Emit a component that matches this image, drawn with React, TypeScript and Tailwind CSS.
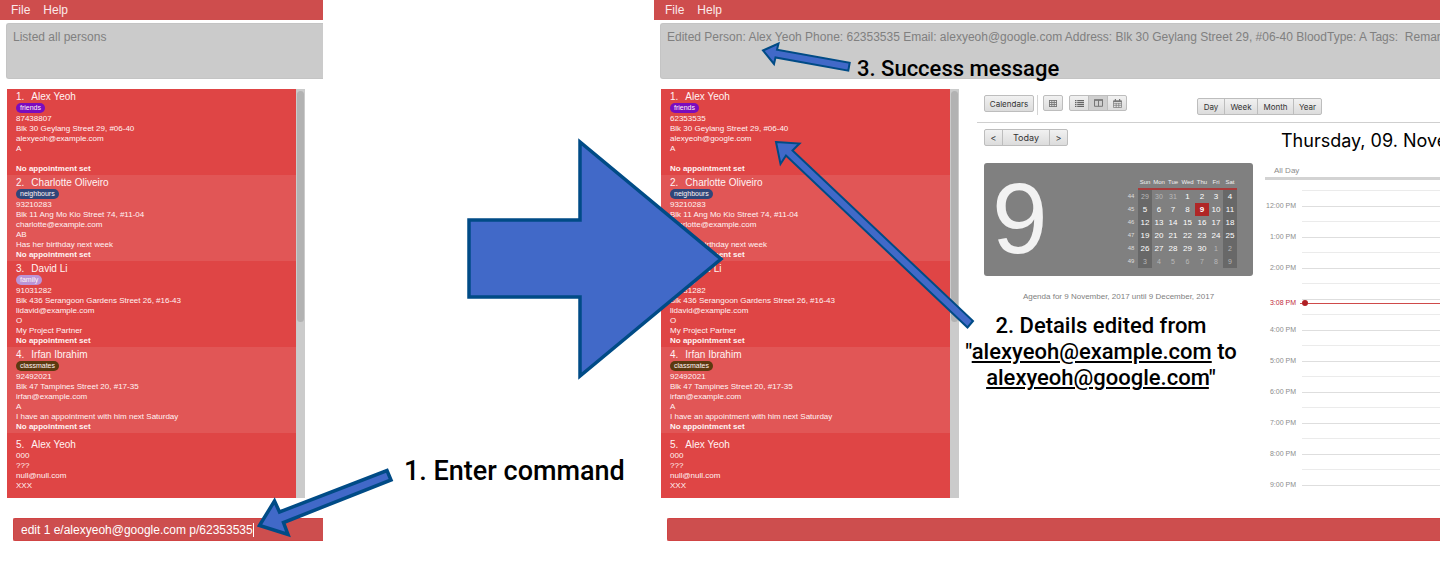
import React from "react";

type Person = {
  name: string;
  tag?: string;
  tagClass?: string;
  lines: string[];
  appointment?: string;
};

const basePeople: Person[] = [
  {
    name: "Alex Yeoh",
    tag: "friends",
    tagClass: "bg-[#7a0cbe]",
    lines: ["87438807", "Blk 30 Geylang Street 29, #06-40", "alexyeoh@example.com", "A", ""],
    appointment: "No appointment set",
  },
  {
    name: "Charlotte Oliveiro",
    tag: "neighbours",
    tagClass: "bg-[#2f4679]",
    lines: ["93210283", "Blk 11 Ang Mo Kio Street 74, #11-04", "charlotte@example.com", "AB", "Has her birthday next week"],
    appointment: "No appointment set",
  },
  {
    name: "David Li",
    tag: "family",
    tagClass: "bg-[#bb95d8]",
    lines: ["91031282", "Blk 436 Serangoon Gardens Street 26, #16-43", "lidavid@example.com", "O", "My Project Partner"],
    appointment: "No appointment set",
  },
  {
    name: "Irfan Ibrahim",
    tag: "classmates",
    tagClass: "bg-[#5b390f]",
    lines: ["92492021", "Blk 47 Tampines Street 20, #17-35", "irfan@example.com", "A", "I have an appointment with him next Saturday"],
    appointment: "No appointment set",
  },
  { name: "Alex Yeoh", lines: ["000", "???", "null@null.com", "XXX"] },
];

const editedPeople: Person[] = [
  {
    ...basePeople[0],
    lines: ["62353535", "Blk 30 Geylang Street 29, #06-40", "alexyeoh@google.com", "A", ""],
  },
  ...basePeople.slice(1),
];

function PersonList({ people }: { people: Person[] }) {
  return (
    <div className="flex w-[298px] shrink-0 bg-[#cbcbcb]">
      <ol className="flex w-[289px] flex-col bg-[#df4545] text-[8px] leading-[10px] text-[#fff3f3]">
        {people.map((p, i) => (
          <li
            key={i}
            className={
              (i % 2 ? "bg-[#e15656] " : "bg-[#df4545] ") +
              (p.tag ? "pt-0.5 pb-px " : "pt-1.5 pb-[7px] ") +
              "pl-[9px]"
            }
          >
            <h2 className="flex gap-[7px] text-[10px] leading-3">
              <span>{i + 1}.</span>
              <span>{p.name}</span>
            </h2>
            {p.tag && (
              <div className="mb-px flex">
                <span className={"rounded-[5px] px-1 text-[7px] leading-[10px] " + p.tagClass}>{p.tag}</span>
              </div>
            )}
            {p.lines.map((l, j) => (
              <p key={j} className="h-[10px] whitespace-nowrap">
                {l}
              </p>
            ))}
            {p.appointment && <p className="font-bold">{p.appointment}</p>}
          </li>
        ))}
      </ol>
      <div className="w-[9px] px-px pt-0.5">
        <div className="h-[231px] rounded-sm bg-[#b2b2b2]" />
      </div>
    </div>
  );
}

function AppWindow({
  message,
  people,
  command,
  children,
}: {
  message: string;
  people: Person[];
  command: string;
  children?: React.ReactNode;
}) {
  return (
    <section className="flex flex-col overflow-hidden">
      <nav className="flex h-5 items-center gap-[13px] bg-[#ce4d4d] pl-[11px] text-[12px] text-[#fbeaea]">
        <button type="button">File</button>
        <button type="button">Help</button>
      </nav>
      <p
        role="status"
        className="mt-[3px] ml-1.5 h-14 overflow-hidden rounded-l-[3px] border border-r-0 border-[#c4c4c4] bg-[#cbcbcb] pt-[5px] pl-1.5 text-[12px] leading-4 whitespace-pre text-[#808080]"
      >
        {message}
      </p>
      <div className="mt-[10px] ml-[7px] flex h-[409px]">
        <PersonList people={people} />
        {children}
      </div>
      <div className="mt-5 ml-[13px] flex h-[23px] items-center rounded-l-[2px] border border-r-0 border-[#d04444] bg-[#cd4e4e] pl-[7px] text-[12px] text-white">
        <input
          aria-label="Command"
          defaultValue={command}
          className={"bg-transparent outline-none " + (command ? "field-sizing-content" : "min-w-0 flex-1")}
        />
        {command && <span className="h-3.5 w-px bg-white" />}
      </div>
    </section>
  );
}

function GridIcon() {
  return (
    <svg width="8" height="7" viewBox="0 0 8 7" fill="none" stroke="#777">
      <path d="M0 .5h8M0 2.5h8M0 4.5h8M0 6.5h8M.5 0v7M2.8 0v7M5.2 0v7M7.5 0v7" strokeWidth=".9" />
    </svg>
  );
}

function ListIcon() {
  return (
    <svg width="9" height="7" viewBox="0 0 9 7" fill="none" stroke="#666">
      <path d="M0 .7h1.5M0 2.6h1.5M0 4.5h1.5M0 6.4h1.5M2.2.7H9M2.2 2.6H9M2.2 4.5H9M2.2 6.4H9" strokeWidth="1.2" />
    </svg>
  );
}

function ColumnsIcon() {
  return (
    <svg width="9" height="8" viewBox="0 0 9 8" fill="none" stroke="#777">
      <path d="M.5 1h8v6.3h-8zM4.5 1v6.3" />
      <path d="M0 1h9" strokeWidth="1.4" />
    </svg>
  );
}

function CalendarIcon() {
  return (
    <svg width="9" height="9" viewBox="0 0 9 9" fill="none" stroke="#777">
      <path d="M.5 2h8v6.5h-8zM.5 4.3h8M.5 6.3h8M3.2 4v4.5M5.8 4v4.5" strokeWidth=".7" />
      <path d="M.3 2.2h8.4" strokeWidth="1.6" />
      <path d="M2.4 0v2M6.6 0v2" strokeWidth="1.2" />
    </svg>
  );
}

const groupClass =
  "flex overflow-hidden rounded-[2px] border border-[#bdbdbd] bg-linear-to-b from-[#f1f1f1] to-[#dcdcdc] text-[#333]";

const weekdays = [
  { name: "Sun", width: "w-[14px]" },
  { name: "Mon", width: "w-[14px]" },
  { name: "Tue", width: "w-[14px]" },
  { name: "Wed", width: "w-[15px]" },
  { name: "Thu", width: "w-[14px]" },
  { name: "Fri", width: "w-[14px]" },
  { name: "Sat", width: "w-[14px]" },
];

const weeks: { no: number; days: number[]; faded: (d: number) => boolean }[] = [
  { no: 44, days: [29, 30, 31, 1, 2, 3, 4], faded: (d) => d > 20 },
  { no: 45, days: [5, 6, 7, 8, 9, 10, 11], faded: () => false },
  { no: 46, days: [12, 13, 14, 15, 16, 17, 18], faded: () => false },
  { no: 47, days: [19, 20, 21, 22, 23, 24, 25], faded: () => false },
  { no: 48, days: [26, 27, 28, 29, 30, 1, 2], faded: (d) => d < 20 },
  { no: 49, days: [3, 4, 5, 6, 7, 8, 9], faded: () => true },
];

function MonthCard() {
  return (
    <div className="flex h-[113px] w-[269px] justify-between rounded-[3px] bg-[#808080] pr-4 pl-2">
      <div className="text-[100px] leading-[110px] text-[#f2f2f2]">9</div>
      <table className="mt-[13px] h-fit table-fixed border-collapse text-center text-[8px] leading-[13px]">
        <thead>
          <tr className="h-3 text-[6px] leading-3 text-[#f0f0f0]">
            <th className="w-3 p-0" />
            {weekdays.map((d) => (
              <th key={d.name} className={"border-b-2 border-[#a93a3a] p-0 font-normal " + d.width}>
                {d.name}
              </th>
            ))}
          </tr>
        </thead>
        <tbody>
          {weeks.map((w) => (
            <tr key={w.no}>
              <th className="p-0 pr-0.5 text-[6px] font-normal text-[#dedede]">{w.no}</th>
              {w.days.map((d, i) => (
                <td
                  key={i}
                  className={
                    "h-[13px] p-0 " +
                    (w.no === 45 && d === 9
                      ? "bg-[#b02626] font-bold "
                      : i === 0 || i === 6
                        ? "bg-[#686868] "
                        : "") +
                    (w.faded(d) ? "text-[7px] text-[#b9b9b9]" : "text-white")
                  }
                >
                  {d}
                </td>
              ))}
            </tr>
          ))}
        </tbody>
      </table>
    </div>
  );
}

const hours = ["12:00 PM", "1:00 PM", "2:00 PM", "", "4:00 PM", "5:00 PM", "6:00 PM", "7:00 PM", "8:00 PM", "9:00 PM"];

function DayView() {
  return (
    <div className="min-w-0 flex-1">
      <h1 className="h-[37px] overflow-hidden pl-4 font-[Inter,sans-serif] text-[18px] leading-6 whitespace-nowrap text-black">
        Thursday, 09. November 2017
      </h1>
      <div className="border-b-3 border-[#d3d3d3] pb-px pl-[9px] text-[8px] leading-[10px] text-[#8c8c8c]">All Day</div>
      <div className="relative pt-[10px]">
        <div className="ml-[37px] h-px bg-[#ebebeb]" />
        {hours.map((h, i) => (
          <div key={i} className="flex h-[31px] items-center gap-1.5">
            <span className="w-[31px] text-right text-[7px] whitespace-nowrap text-[#8c8c8c]">{h}</span>
            <div className={"h-full flex-1 " + (i < hours.length - 1 ? "border-b border-[#ebebeb]" : "")}>
              <div className="h-4 border-b border-[#dedede]" />
            </div>
          </div>
        ))}
        <div className="absolute top-[118px] right-0 left-0 flex h-[10px] items-center text-[7px] text-[#c22b3a]">
          <span className="w-[31px] text-right whitespace-nowrap">3:08 PM</span>
          <span className="ml-1 h-px w-0.5 bg-[#c84a4a]" />
          <span className="size-1.5 rounded-full bg-[#b01f24]" />
          <span className="h-px flex-1 bg-[#cf4a4a]" />
        </div>
      </div>
    </div>
  );
}

function CalendarPanel() {
  return (
    <div className="ml-[18px] flex min-w-0 flex-1 flex-col">
      <div className="flex h-[34px] shrink-0 items-start border-b border-[#cfcfcf] pt-1.5 pl-[7px] font-[Inter,sans-serif] text-[8px]">
        <button type="button" className={groupClass + " h-[17px] w-[50px] items-center justify-center"}>
          Calendars
        </button>
        <span className="mx-[3px] h-5 w-px bg-[#d4d4d4]" />
        <button type="button" aria-label="Open date" className={groupClass + " ml-0.5 h-4 w-5 items-center justify-center"}>
          <GridIcon />
        </button>
        <div className={groupClass + " ml-1.5 h-4 w-[58px]"}>
          <button type="button" aria-label="Agenda" className="flex flex-1 items-center justify-center">
            <ListIcon />
          </button>
          <button type="button" aria-label="Split" className="flex flex-1 items-center justify-center border-x border-[#bdbdbd] bg-[#cfcfcf]">
            <ColumnsIcon />
          </button>
          <button type="button" aria-label="Month" className="flex flex-1 items-center justify-center">
            <CalendarIcon />
          </button>
        </div>
        <div className={groupClass + " mt-[3px] ml-[70px] h-[17px] items-stretch"}>
          <button type="button" className="w-[26px]">Day</button>
          <button type="button" className="w-[33px] border-l border-[#bdbdbd]">Week</button>
          <button type="button" className="w-9 border-l border-[#bdbdbd]">Month</button>
          <button type="button" className="w-7 border-l border-[#bdbdbd]">Year</button>
        </div>
      </div>
      <div className="flex pt-1.5 pl-[7px]">
        <div className="w-[269px] shrink-0">
          <div className={groupClass + " h-[17px] w-[84px] font-[Inter,sans-serif] text-[9px]"}>
            <button type="button" aria-label="Previous day" className="w-[17px]">&lt;</button>
            <button type="button" className="flex-1 border-x border-[#bdbdbd]">Today</button>
            <button type="button" aria-label="Next day" className="w-[17px]">&gt;</button>
          </div>
          <div className="mt-[17px]">
            <MonthCard />
          </div>
          <p className="mt-4 text-center text-[8px] leading-[10px] text-[#808080]">
            Agenda for 9 November, 2017 until 9 December, 2017
          </p>
        </div>
        <div className="ml-3 flex min-w-0 flex-1">
          <DayView />
        </div>
      </div>
    </div>
  );
}

function Arrows() {
  return (
    <svg
      className="pointer-events-none absolute top-0 left-0"
      width="1440"
      height="569"
      viewBox="0 0 1440 569"
      fill="#4169c8"
      stroke="#004b86"
      aria-hidden="true"
    >
      <path strokeWidth="3.5" d="M469 220H580V142L721 259L580 376V297H469Z" />
      <path strokeWidth="3.5" d="M259.500 525.500L274.500 501L279.500 512L387 470.500L391 480L283.500 522.500L288 534.500Z" />
      <path strokeWidth="2" d="M776 142L799.500 143.500L792.500 150.500L973 321L967.500 327.500L786 155.500L780.500 164Z" />
      <path strokeWidth="2" d="M763 50.500L778.500 43.500L777 49.700L849.700 62.700L848.300 70.700L775.500 57.500L774 64Z" />
    </svg>
  );
}

export default function App() {
  return (
    <main className="relative min-h-[569px] overflow-hidden bg-white font-['Liberation_Sans',Arial,sans-serif]">
      <div className="grid grid-cols-[323px_minmax(0,1fr)] gap-x-[331px]">
        <AppWindow
          message="Listed all persons"
          people={basePeople}
          command="edit 1 e/alexyeoh@google.com p/62353535"
        />
        <AppWindow
          message="Edited Person: Alex Yeoh Phone: 62353535 Email: alexyeoh@google.com Address: Blk 30 Geylang Street 29, #06-40 BloodType: A Tags:  Remark: [friends]"
          people={editedPeople}
          command=""
        >
          <CalendarPanel />
        </AppWindow>
      </div>
      <Arrows />
      <p className="absolute top-[455px] left-[404px] font-[Roboto,sans-serif] text-[27px] leading-8 font-medium whitespace-nowrap text-black">
        1. Enter command
      </p>
      <p className="absolute top-[55px] left-[857px] font-[Roboto,sans-serif] text-[22px] leading-7 font-medium whitespace-nowrap text-black">
        3. Success message
      </p>
      <p className="absolute top-[313px] left-[961px] w-[280px] text-center font-[Roboto,sans-serif] text-[22px] leading-[26px] font-medium whitespace-nowrap text-black">
        2. Details edited from
        <br />
        &quot;<span className="underline">alexyeoh@example.com</span> to
        <br />
        <span className="underline">alexyeoh@google.com</span>&quot;
      </p>
    </main>
  );
}
